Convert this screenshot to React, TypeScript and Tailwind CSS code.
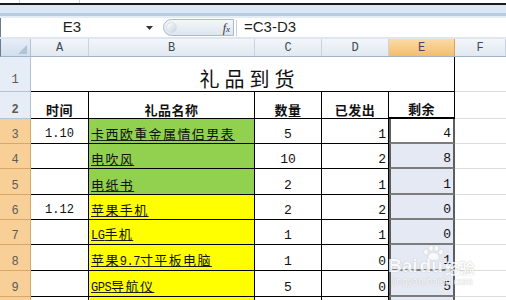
import React from "react";

const CJK = "font-['Noto_Sans_CJK_SC',sans-serif]";
const MONO = "font-['Liberation_Mono',monospace]";

function Mixed({ text }: { text: string }) {
  const parts = text.match(/[\x20-\x7e]+|[^\x20-\x7e]+/g) || [];
  return (
    <>
      {parts.map((p, i) =>
        /^[\x20-\x7e]+$/.test(p) ? (
          <span key={i} className={`${MONO} text-[12px] tracking-[-0.5px]`}>
            {p}
          </span>
        ) : (
          <span key={i} className={`${CJK} text-[13px] tracking-[1.4px]`}>
            {p}
          </span>
        )
      )}
    </>
  );
}

type Row = {
  n: number;
  h: string;
  a: string;
  b: string;
  fill: string;
  c: string;
  d: string;
  e: string;
  active?: boolean;
};

const rows: Row[] = [
  { n: 3, h: "h-[25px]", a: "1.10", b: "卡西欧重金属情侣男表", fill: "bg-[#92d050]", c: "5", d: "1", e: "4", active: true },
  { n: 4, h: "h-[25px]", a: "", b: "电吹风", fill: "bg-[#92d050]", c: "10", d: "2", e: "8" },
  { n: 5, h: "h-[26px]", a: "", b: "电纸书", fill: "bg-[#92d050]", c: "2", d: "1", e: "1" },
  { n: 6, h: "h-[25px]", a: "1.12", b: "苹果手机", fill: "bg-[#ffff00]", c: "2", d: "2", e: "0" },
  { n: 7, h: "h-[25px]", a: "", b: "LG手机", fill: "bg-[#ffff00]", c: "1", d: "1", e: "0" },
  { n: 8, h: "h-[26px]", a: "", b: "苹果9.7寸平板电脑", fill: "bg-[#ffff00]", c: "1", d: "0", e: "1" },
  { n: 9, h: "h-[26px]", a: "", b: "GPS导航仪", fill: "bg-[#ffff00]", c: "5", d: "0", e: "5" },
  { n: 10, h: "h-[26px]", a: "", b: "", fill: "bg-[#ffff00]", c: "", d: "", e: "" },
];

function RowHead({ n, sel }: { n: number; sel: boolean }) {
  return (
    <div
      className={`w-[31px] shrink-0 flex items-end justify-center pb-[2px] border-r border-b ${MONO} text-[12px] text-[#5b5b5b] ${
        sel ? "bg-[#f8cf96] border-[#d7a968]" : "bg-[#e6edf6] border-[#b4c4d8]"
      }`}
    >
      {n}
    </div>
  );
}

function ColHead({ w, label, sel }: { w: string; label: string; sel?: boolean }) {
  return (
    <div
      className={`${w} shrink-0 h-full flex items-center justify-center border-r ${MONO} text-[12px] text-[#3d4a5a] ${
        sel
          ? "bg-gradient-to-b from-[#fbdca6] to-[#f4bd6a] border-[#d8a45c]"
          : "bg-gradient-to-b from-[#f3f6fa] to-[#e1e8f1] border-[#c7d3e2]"
      }`}
    >
      {label}
    </div>
  );
}

export default function App() {
  return (
    <div className="relative w-[506px] h-[300px] overflow-hidden bg-white select-none">
      {/* top remnant */}
      <div className="h-[3px] flex bg-white">
        <div className="w-[20px] border-r border-[#d4d4d4]" />
        <div className="w-[60px] border-r border-[#d4d4d4]" />
        <div className="w-[160px]" />
      </div>
      <div className="h-[2px] bg-[#1a1a1a]" />
      {/* ribbon band */}
      <div className="h-[8px] bg-[#dce7f4]" />
      <div className="h-[3px] bg-[#b7cbe3]" />
      <div className="h-[2px] bg-[#e4ecf6]" />
      {/* formula bar */}
      <div className="h-[19px] flex items-center bg-white border-l border-[#6b7b8f]">
        <div className="w-[140px] text-center font-['Liberation_Sans',sans-serif] text-[15px] text-[#1e1e1e] pl-[2px]">
          E3
        </div>
        <div className="w-[17px] flex justify-center">
          <svg width="7" height="4" viewBox="0 0 7 4">
            <path d="M0 0 L7 0 L3.5 4 Z" fill="#333" />
          </svg>
        </div>
        <div className="ml-[5px] w-[71px] h-[17px] rounded-l-full border border-[#a8b9cf] bg-gradient-to-b from-[#f4f7fb] to-[#dde5ef] flex items-center pl-[2px] pr-[3px]">
          <div className="w-[11px] h-[11px] rounded-full bg-gradient-to-br from-[#ffffff] to-[#c8d3df] border border-[#d6dee8]" />
          <div className="flex-1" />
          <span className="font-['Liberation_Serif',serif] italic text-[12px] text-[#333]">
            f<span className="text-[9px]">x</span>
          </span>
        </div>
        <div className="w-[1px] h-[16px] bg-[#c3cfdd] ml-[2px]" />
        <div className="pl-[7px] font-['Liberation_Sans',sans-serif] text-[15px] text-[#1e1e1e]">=C3-D3</div>
      </div>
      <div className="h-[2px] bg-[#dfe6ef]" />
      {/* column header */}
      <div className="h-[18px] flex border-b border-[#9fb3cb] border-l border-l-[#6b7b8f]">
        <div className="w-[30px] shrink-0 h-full bg-gradient-to-b from-[#e6eef8] to-[#d3deec] border-r border-[#b4c4d8] relative">
          <svg className="absolute right-[3px] bottom-[2px]" width="9" height="9" viewBox="0 0 9 9">
            <path d="M9 0 L9 9 L0 9 Z" fill="#b3c3d6" />
          </svg>
        </div>
        <ColHead w="w-[58px]" label="A" />
        <ColHead w="w-[166px]" label="B" />
        <ColHead w="w-[67px]" label="C" />
        <ColHead w="w-[67px]" label="D" />
        <ColHead w="w-[66px]" label="E" sel />
        <ColHead w="flex-1" label="F" />
      </div>

      {/* row 1 */}
      <div className="h-[35px] flex">
        <RowHead n={1} sel={false} />
        <div
          className={`w-[424px] shrink-0 flex items-end justify-center pb-[1px] border-r border-b border-black ${CJK} text-[20px] tracking-[5px] text-[#111] leading-none`}
        >
          <span className="pl-[14px] pb-[1px]">礼品到货</span>
        </div>
        <div className="flex-1 border-b border-[#dadcdd]" />
      </div>

      {/* row 2 */}
      <div className={`h-[27px] flex ${CJK} text-[13px] font-bold text-[#111] leading-none`}>
        <RowHead n={2} sel={false} />
        <div className="w-[58px] shrink-0 flex items-end justify-center pb-[2px] border-r border-b border-black tracking-[0.5px]">时间</div>
        <div className="w-[166px] shrink-0 flex items-end justify-center pb-[2px] border-r border-b border-black tracking-[0.5px]">礼品名称</div>
        <div className="w-[67px] shrink-0 flex items-end justify-center pb-[2px] border-r border-b border-black tracking-[0.5px]">数量</div>
        <div className="w-[67px] shrink-0 flex items-end justify-center pb-[2px] border-r border-b border-black tracking-[0.5px]">已发出</div>
        <div className="w-[66px] shrink-0 flex items-end justify-center pb-[2px] border-r border-b-2 border-black tracking-[0.5px]">剩余</div>
        <div className="flex-1 border-b border-[#dadcdd]" />
      </div>

      {/* data rows */}
      {rows.map((r) => (
        <div key={r.n} className={`${r.h} flex text-[#111] leading-none`}>
          <RowHead n={r.n} sel={true} />
          <div className={`w-[58px] shrink-0 flex items-end justify-center pb-[3px] border-r border-b border-black ${MONO} text-[12px]`}>
            {r.a}
          </div>
          <div className={`w-[166px] shrink-0 flex items-end pl-[2px] pb-[2px] border-r border-b border-black ${r.fill}`}>
            <span className="underline decoration-[#222] underline-offset-[1px]">
              <Mixed text={r.b} />
            </span>
          </div>
          <div className={`w-[67px] shrink-0 flex items-end justify-center pb-[2px] border-r border-b border-black ${MONO} text-[13px]`}>
            {r.c}
          </div>
          <div className={`w-[67px] shrink-0 flex items-end justify-end pr-[2px] pb-[2px] border-r border-b border-black ${MONO} text-[13px]`}>
            {r.d}
          </div>
          <div
            className={`w-[66px] shrink-0 flex items-end justify-end pr-[2px] pb-[2px] border-l-2 border-r-2 border-b-2 border-l-[#5e5e5e] border-r-[#5e5e5e] border-b-[#7c7c7c] ${MONO} text-[13px] ${
              r.active ? "bg-white" : "bg-[#e5e9f4]"
            }`}
          >
            {r.e}
          </div>
          <div className="flex-1 border-b border-[#dadcdd]" />
        </div>
      ))}

      {/* watermark */}
      <div className="absolute left-[388px] top-[244px] w-[118px] h-[44px] pointer-events-none opacity-80">
        <svg className="absolute left-[34px] top-[1px]" width="22" height="16" viewBox="0 0 22 16">
          <ellipse cx="4" cy="7" rx="2.4" ry="3" fill="#ffffff" stroke="#cfcfcf" strokeWidth="0.6" />
          <ellipse cx="9" cy="3.2" rx="2.4" ry="3" fill="#ffffff" stroke="#cfcfcf" strokeWidth="0.6" />
          <ellipse cx="14.5" cy="3.2" rx="2.4" ry="3" fill="#ffffff" stroke="#cfcfcf" strokeWidth="0.6" />
          <ellipse cx="19" cy="7" rx="2.4" ry="3" fill="#ffffff" stroke="#cfcfcf" strokeWidth="0.6" />
          <path d="M11.5 7.5 C7 7.5 5 12 6.5 14.5 C8 16 10 15 11.5 15 C13 15 15 16 16.5 14.5 C18 12 16 7.5 11.5 7.5 Z" fill="#ffffff" stroke="#cfcfcf" strokeWidth="0.6" />
        </svg>
        <div className="absolute left-[0px] top-[12px] flex items-end font-['Liberation_Sans',sans-serif] font-bold text-[19px] text-white [text-shadow:0_0_1px_#9a9a9a] leading-none">
          <span>Bai</span>
          <span className="ml-[2px]">du</span>
          <span className={`${CJK} text-[15px] font-bold ml-[2px]`}>经验</span>
        </div>
        <div className="absolute left-[4px] top-[33px] font-['Liberation_Sans',sans-serif] text-[10px] text-white [text-shadow:0_0_1px_#9a9a9a] leading-none">
          jingyan.baidu.com
        </div>
      </div>
    </div>
  );
}
